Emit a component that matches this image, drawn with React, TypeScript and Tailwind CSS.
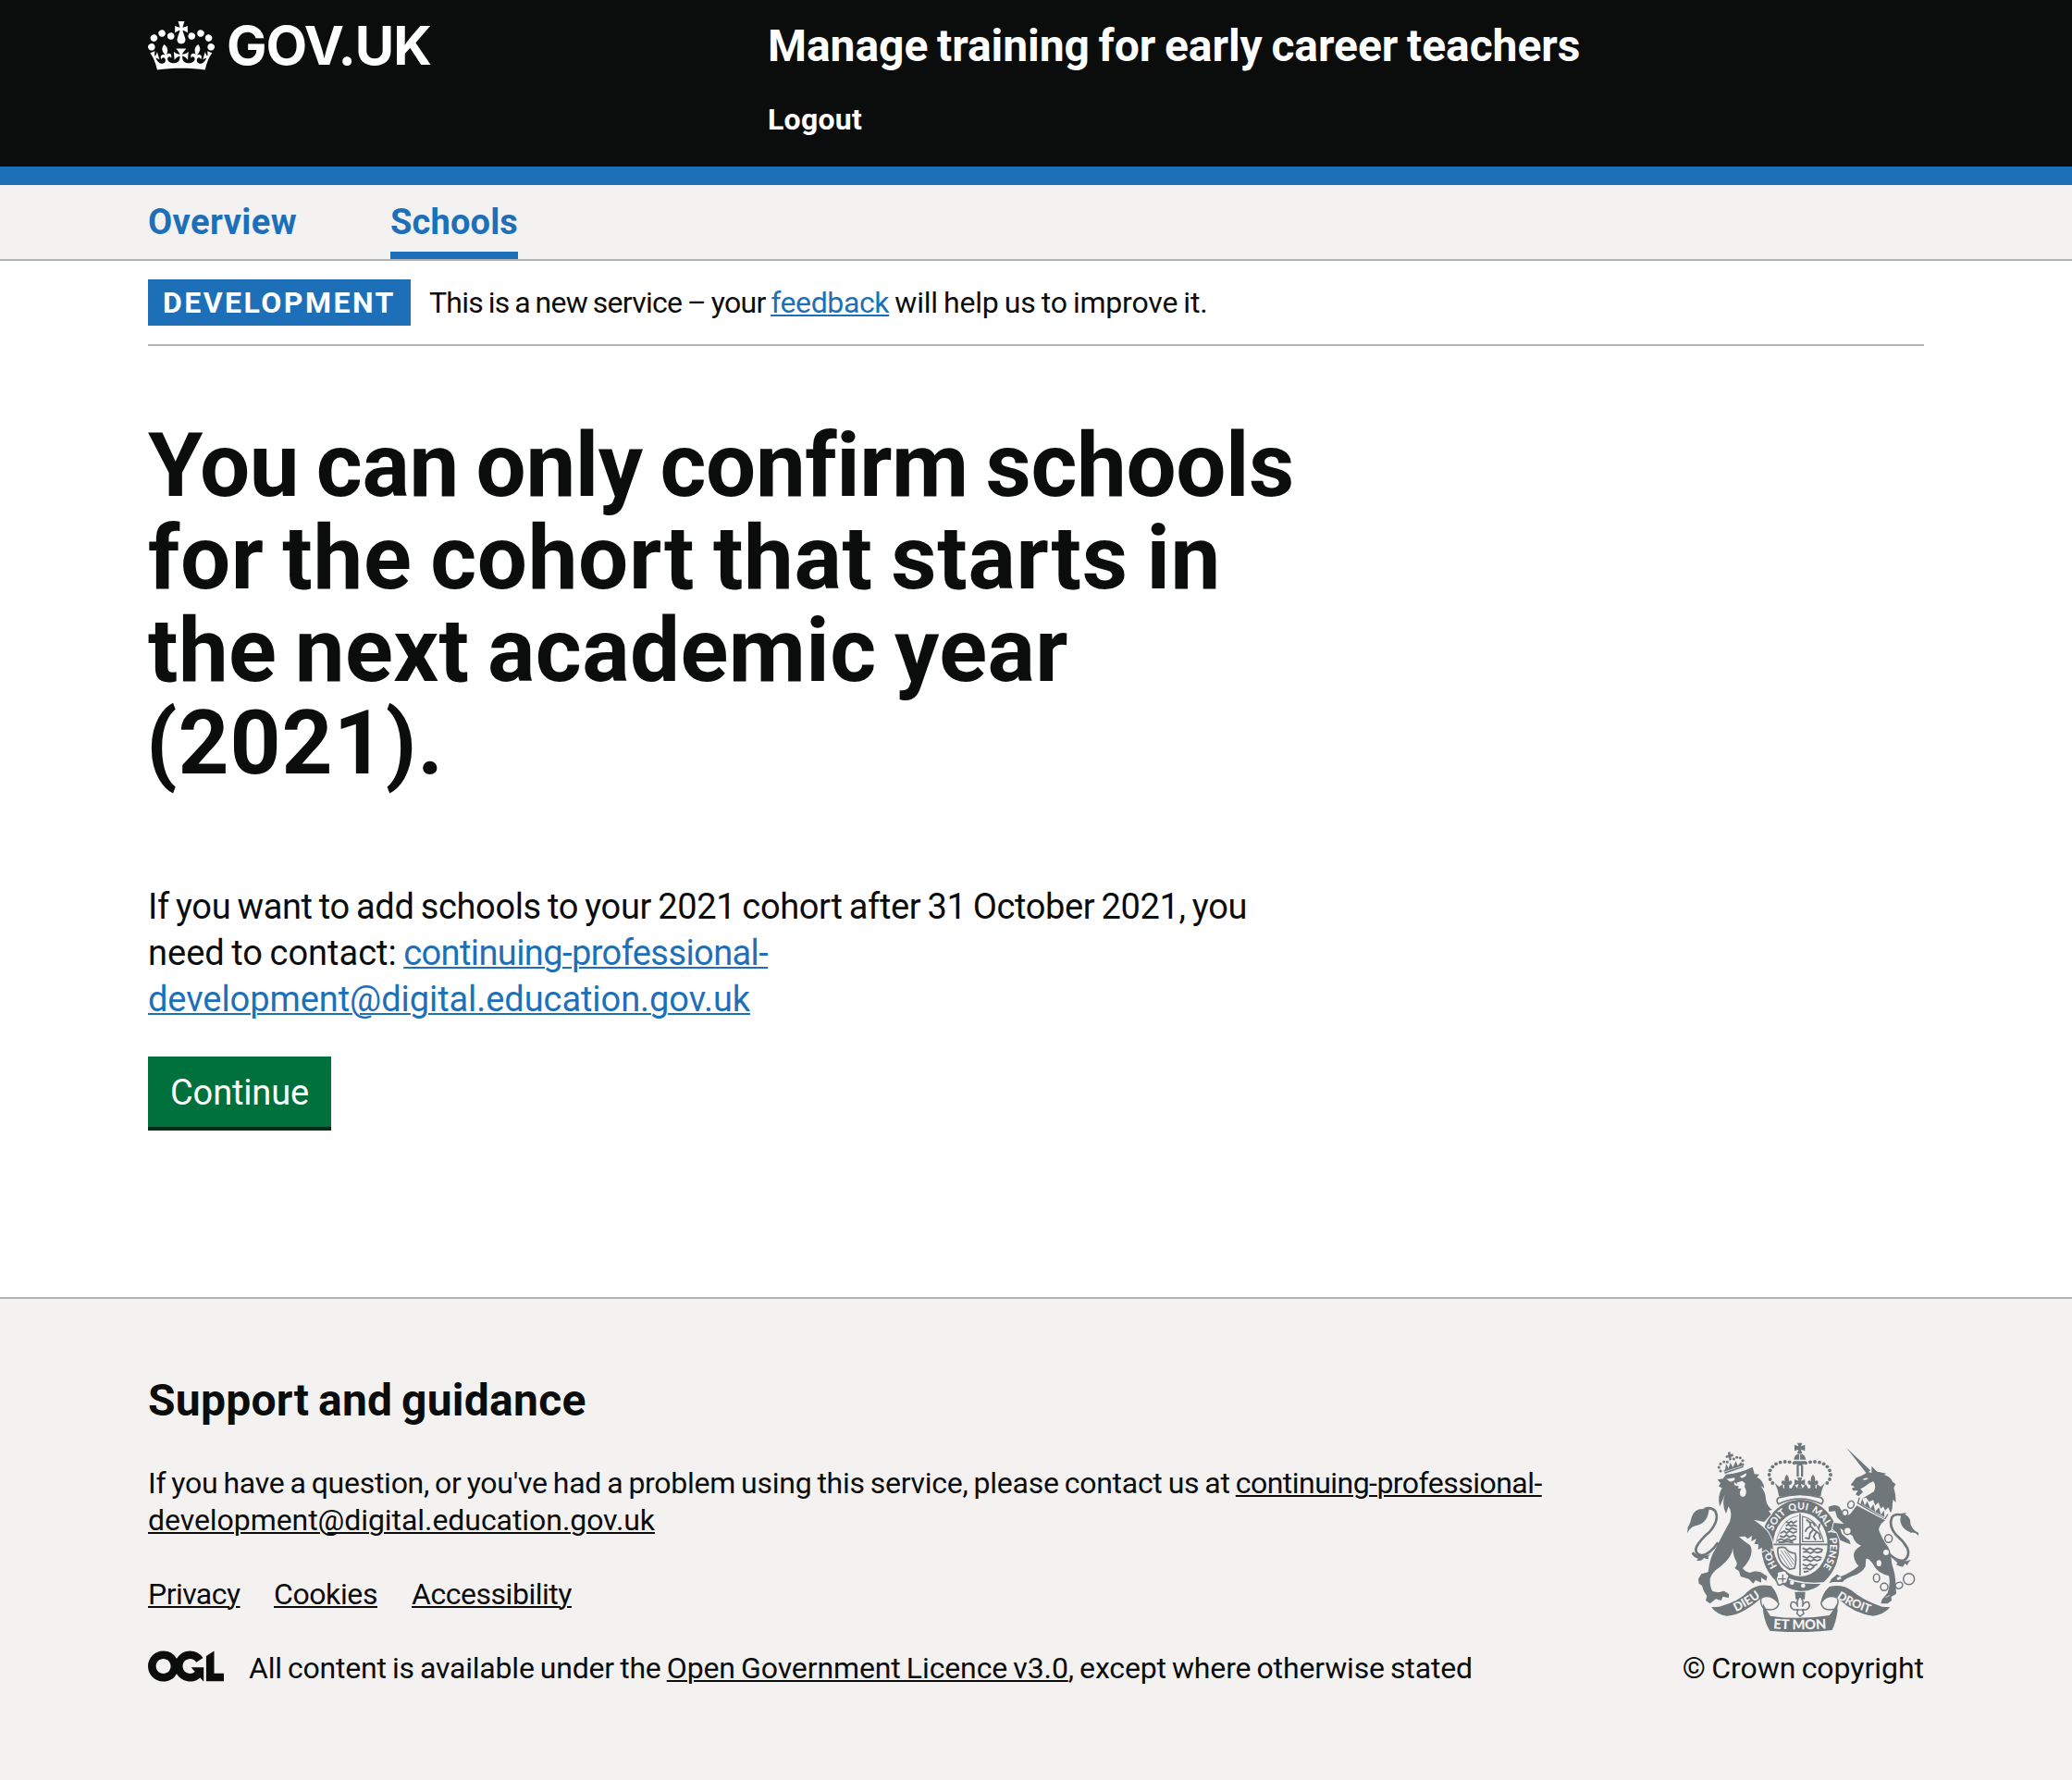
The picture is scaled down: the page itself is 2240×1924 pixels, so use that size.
import type { ReactNode } from "react";

const INK = "#6f777b";
const PAPER = "#f3f2f1";

function Crown() {
  return (
    <svg viewBox="0 0 132 97" className="h-[53px] w-[72px]" fill="currentColor" aria-hidden="true">
      <path
        fillRule="evenodd"
        d="M25 30.2c3.5 1.5 7.7-.2 9.1-3.7 1.5-3.6-.2-7.8-3.9-9.2-3.6-1.4-7.6.3-9.1 3.9-1.4 3.5.3 7.5 3.9 9zM9 39.5c3.6 1.5 7.8-.2 9.2-3.7 1.5-3.6-.2-7.8-3.9-9.1-3.6-1.5-7.6.2-9.1 3.8-1.4 3.5.3 7.5 3.8 9zM4.4 57.2c3.5 1.5 7.7-.2 9.1-3.8 1.5-3.6-.2-7.7-3.9-9.1-3.5-1.5-7.6.3-9.1 3.8-1.4 3.5.3 7.6 3.9 9.1zm38.3-21.4c3.5 1.5 7.7-.2 9.1-3.8 1.5-3.6-.2-7.7-3.9-9.1-3.6-1.5-7.6.3-9.1 3.8-1.3 3.6.4 7.7 3.9 9.1zm64.4-5.6c-3.6 1.5-7.8-.2-9.1-3.7-1.5-3.6.2-7.8 3.8-9.2 3.6-1.4 7.7.3 9.2 3.9 1.3 3.5-.4 7.5-3.9 9zm15.9 9.3c-3.6 1.5-7.7-.2-9.1-3.7-1.5-3.6.2-7.8 3.7-9.1 3.6-1.5 7.7.2 9.2 3.8 1.5 3.5-.3 7.5-3.8 9zm4.7 17.7c-3.6 1.5-7.8-.2-9.2-3.8-1.5-3.6.2-7.7 3.9-9.1 3.6-1.5 7.7.3 9.2 3.8 1.3 3.5-.4 7.6-3.9 9.1zM89.3 35.8c-3.6 1.5-7.8-.2-9.2-3.8-1.4-3.6.2-7.7 3.9-9.1 3.6-1.5 7.7.3 9.2 3.8 1.4 3.6-.3 7.7-3.9 9.1zM69.7 17.7l8.9 4.7V9.3l-8.9 2.8c-.2-.3-.5-.6-.9-.9L72.4 0H59.6l3.5 11.2c-.3.3-.6.5-.9.9l-8.8-2.8v13.1l8.8-4.7c.3.3.6.7.9.9l-5 15.4v.1c-.2.8-.4 1.6-.4 2.4 0 4.1 3.1 7.5 7 8.1h.2c.3 0 .7.1 1 .1.4 0 .7 0 1-.1h.2c4-.6 7.1-4.1 7.1-8.1 0-.8-.1-1.7-.4-2.4V34l-5.1-15.4c.4-.2.7-.6 1-.9zM66 92.8c16.9 0 32.8 1.1 47.1 3.2 4-16.9 8.9-26.7 14-33.5l-9.6-3.4c1 4.9 1.1 7.2 0 10.2-1.5-1.4-3-4.3-4.2-8.7L108.6 76c2.8-2 5-3.2 7.5-3.3-4.4 9.4-10 11.9-13.6 11.2-4.3-.8-6.3-4.6-5.6-7.9 1-4.7 5.7-5.9 8-.5 4.3-8.7-3-11.4-7.6-8.8 7.1-7.2 7.9-13.5 2.1-21.1-8 6.1-8.1 12.3-4.5 20.8-4.7-5.4-12.1-2.5-9.5 6.2 3.4-5.2 7.9-2 7.2 3.1-.6 4.3-6.4 7.8-13.5 7.2-10.3-.9-10.9-8-11.2-13.8 2.5-.5 7.1 1.8 11 7.3L80.2 60c-4.1 4.4-8 5.3-12.3 5.4 1.4-4.4 8-11.6 8-11.6H55.5s6.4 7.2 7.9 11.6c-4.2-.1-8-1-12.3-5.4l1.4 16.4c3.9-5.5 8.5-7.7 10.9-7.3-.3 5.8-.9 12.8-11.1 13.8-7.2.6-12.9-2.9-13.5-7.2-.7-5 3.8-8.3 7.1-3.1 2.7-8.7-4.6-11.6-9.4-6.2 3.7-8.5 3.6-14.7-4.6-20.8-5.8 7.6-5 13.9 2.2 21.1-4.7-2.6-11.9.1-7.7 8.8 2.3-5.5 7.1-4.2 8.1.5.7 3.3-1.3 7.1-5.7 7.9-3.5.7-9-1.8-13.5-11.2 2.5.1 4.7 1.3 7.5 3.3l-4.7-15.4c-1.2 4.4-2.7 7.2-4.3 8.7-1.1-3-.9-5.3 0-10.2l-9.5 3.4c5 6.9 9.9 16.7 14 33.5 14.8-2.1 30.8-3.2 47.7-3.2z"
      />
    </svg>
  );
}

function OglLogo() {
  return (
    <svg viewBox="0 0 483.2 195.7" className="mt-px h-[34px] w-[82px]" fill="currentColor" aria-hidden="true">
      <path d="M421.5 142.8V.1l-50.7 32.3v161.1h112.4v-50.7zm-122.3-9.6A47.12 47.12 0 0 1 221 97.8c0-26 21.1-47.1 47.1-47.1 16.7 0 31.4 8.7 39.7 21.8l42.7-27.2A97.63 97.63 0 0 0 268.1 0c-36.5 0-68.3 20.1-85.1 49.7A98 98 0 0 0 97.8 0C43.9 0 0 43.9 0 97.8s43.9 97.8 97.8 97.8c36.5 0 68.3-20.1 85.1-49.7a97.76 97.76 0 0 0 149.6 25.4l19.4 22.2h3v-87.8h-80l24.3 27.5zM97.8 145c-26 0-47.1-21.1-47.1-47.1s21.1-47.1 47.1-47.1 47.1 21.1 47.1 47.1S123.8 145 97.8 145" />
    </svg>
  );
}

function Lion() {
  const pearls = [[120, 90], [115, 78], [120, 67], [131, 60], [142, 61], [163, 51], [173, 46], [184, 47], [192, 56], [192, 69]];
  return (
    <g transform="translate(60 60)">
      <path
        stroke={PAPER}
        strokeWidth="6"
        paintOrder="stroke"
        d="M110 118L128 115L138 101Q185 97 224 77L230 100L246 101L238 110Q258 118 262 146L250 138Q266 158 267 180Q270 205 288 216L276 219L284 230L262 255L228 248Q262 272 275 290Q292 318 290 345L284 340L282 357L268 345L254 352L255 338L242 345L243 328L230 326L236 310L220 318L222 300L208 310L200 302L180 303Q196 318 215 330Q224 340 219 362Q212 385 192 405Q197 415 215 420L232 415L250 418L272 432L268 446L252 436L252 452L234 444L226 455L212 440L185 432L180 415L166 405Q176 395 172 385Q160 365 160 340Q158 370 120 400Q90 420 86 440Q85 465 94 480L112 484L132 479L148 490L146 502L128 497L122 510L105 505L86 520L72 510L76 495L66 480L60 462L50 455L48 440L58 424L80 418Q85 370 105 340Q130 290 150 255Q160 225 146 205L138 228Q122 195 135 165L118 205Q108 175 125 145L114 140L120 130Z"
      />
      <path
        d="M139 116L165 112L167 118Q160 126 150 124ZM183 108L204 97L203 105Q195 114 187 112ZM164 126L176 134L172 128L190 122L200 130L198 142Q208 158 200 170Q190 178 184 168Q180 158 188 148L176 146L180 140L165 136Z"
        fill={PAPER}
      />
      <path d="M130 88L194 67L194 78L134 99ZM135 86L138 66L146 82L152 62L160 78L170 58L176 73L187 60L190 72Z" />
      <path d="M132 93L194 73" stroke={PAPER} strokeWidth="2" />
      <path d="M144 30l8-3 0 9 8-2 2 8-8 2 2 10-7 2-2-10-9 2-2-7 9-3z" />
      {pearls.map(([x, y]) => (
        <circle key={`${x}-${y}`} cx={x} cy={y} r="4.5" />
      ))}
      <path d="M112 322Q85 362 58 364Q34 358 42 336Q55 312 84 288Q118 248 103 220Q90 205 68 213" fill="none" stroke={INK} strokeWidth="8" />
      <path d="M82 220Q76 262 38 268Q22 272 12 292L14 272Q22 262 26 240Q36 212 62 213L84 208ZM32 352Q48 372 88 360Q76 368 82 376Q70 374 66 372Q60 384 42 380L48 374Q34 372 26 358Z" />
    </g>
  );
}

function Unicorn() {
  return (
    <g transform="translate(510 60)">
      <path d="M78 14L156 88L144 98Z" />
      <path d="M92 135L110 112Q132 105 148 93L160 96L160 74L178 92L208 98L200 102Q222 108 228 125L238 133L232 145Q240 170 238 192L230 182L228 196Q228 216 222 226L214 208L204 218L198 205L190 212L182 192L172 202L165 184L152 190L142 176L128 180Q150 168 168 156Q176 138 166 124Q150 128 136 142L124 148L132 158L118 172L108 166L116 154L100 154L96 146L106 142Z" />
      <path d="M130 118q10-8 20-4q-8 8-20 4z" fill={PAPER} />
      <path d="M121 176L115 194L203 246L213 230" fill="none" stroke={INK} strokeWidth="4" />
      <path d="M124 196L130 180L138 202L146 188L156 212L166 198L172 222L184 208L190 232L200 218L202 240Z" />
      <path
        stroke={PAPER}
        strokeWidth="6"
        paintOrder="stroke"
        d="M112 202L204 250Q185 264 183 280Q190 300 205 325Q222 345 222 365Q225 395 234 420L237 440L240 488L224 498L225 510L212 520L190 520L194 506L212 485Q222 455 216 430Q180 422 165 392Q150 372 142 375L140 400Q128 422 100 430Q76 438 66 450L34 450L22 454L30 440L48 425L60 432Q92 420 118 398Q105 385 102 365Q102 345 126 332Q106 325 98 300L58 276L64 294L80 308L88 314L92 328L76 322L58 314L48 290L33 278L38 258L70 262L48 240L42 220L22 222L20 206Q44 196 56 207L68 228Q82 238 92 228Z"
      />
      <path d="M48 437l10-4 3 6-11 4zM205 500l14-6" fill={PAPER} stroke={PAPER} strokeWidth="2" />
      <g fill={PAPER}>
        <ellipse cx="74" cy="226" rx="9" ry="10" stroke={INK} strokeWidth="4" />
        <circle cx="207" cy="354" r="9" />
        <ellipse cx="184" cy="389" rx="8" ry="10" />
      </g>
      <g fill={PAPER} stroke={INK} strokeWidth="4.5">
        <ellipse cx="93" cy="199" rx="10" ry="12" transform="rotate(20 93 199)" />
        <ellipse cx="82" cy="284" rx="12" ry="12" />
        <ellipse cx="215" cy="309" rx="12" ry="13" />
        <ellipse cx="176" cy="437" rx="10" ry="13" />
        <circle cx="201" cy="466" r="12" />
        <ellipse cx="249" cy="461" rx="12" ry="10" transform="rotate(-25 249 461)" />
        <circle cx="281" cy="440" r="18" />
      </g>
      <path d="M218 360Q245 385 266 380Q286 365 276 340Q262 316 240 298Q214 268 226 240Q236 226 262 234" fill="none" stroke={INK} strokeWidth="8" />
      <path d="M250 229L274 225L268 230Q288 240 286 262Q294 284 312 290L312 300Q302 288 288 290Q262 280 256 262Q250 246 256 236ZM226 372Q250 390 288 378Q280 384 276 396L268 390L262 400Q254 402 240 394L244 388Z" />
    </g>
  );
}

function RoyalCrown() {
  const pearls = [[119, 79], [104, 76], [89, 75], [74, 77], [60, 82], [49, 91], [41, 103], [38, 117], [41, 132], [49, 144]];
  const cross = "M-8 -17h16l-4 11 13-5v20l-13-5 4 13h-16l4-13-13 5v-20l13 5z";
  return (
    <g>
      <path d={cross} transform="translate(137 31)" />
      <path d="M118 68Q120 50 137 49Q154 50 157 68ZM118 73H157Q150 88 137 88Q124 88 118 73Z" />
      <path d="M137 50v18" stroke={PAPER} strokeWidth="3" />
      <path d="M127 87h7v36h-7zM141 87h7v36h-7z" />
      {pearls.map(([x, y]) => (
        <g key={`${x}-${y}`}>
          <circle cx={x} cy={y} r="5.8" />
          <circle cx={275 - x} cy={y} r="5.8" />
        </g>
      ))}
      <path d={cross} transform="translate(137 143)" />
      {[95, 180].map((x) => (
        <path
          key={x}
          transform={`translate(${x} 140)`}
          d="M0 -24Q10 -12 6 0Q12 -8 17 0Q18 8 8 10L8 22H-8L-8 10Q-18 8 -17 0Q-12 -8 -6 0Q-10 -12 0 -24Z"
        />
      ))}
      <path d="M56 144L70 156L82 148L84 162L95 158L110 162L118 148L128 160H147L157 148L165 162L180 158L191 162L193 148L205 156L219 144Q208 162 205 188Q137 172 70 188Q66 162 56 144Z" />
      <path d="M68 212Q58 200 68 192Q137 170 207 192Q218 200 208 212Q137 178 68 212Z" fill={PAPER} stroke={INK} strokeWidth="5" />
    </g>
  );
}

function Garter() {
  const words = [
    { word: "HO", at: 114 },
    { word: "SOIT", at: 244 },
    { word: "QUI", at: 322 },
    { word: "MAL", at: 399 },
    { word: "Y", at: 452 },
    { word: "PENSE", at: 521 },
  ];
  return (
    <g>
      <ellipse cx="139" cy="346" rx="127" ry="148" />
      <ellipse cx="139" cy="343" rx="88" ry="104" fill={PAPER} />
      <path id="garter-line" d="M139 456A96 113 0 0 1 139 230A96 113 0 0 1 139 456" fill="none" />
      {words.map(({ word, at }) => (
        <text key={word} fill={PAPER} fontSize="32" fontWeight="900" textAnchor="middle" className="font-[Lato]">
          <textPath href="#garter-line" startOffset={at}>
            {word}
          </textPath>
        </text>
      ))}
      <g fill="none" stroke={INK} strokeWidth="5">
        <path d="M138 242V444M50 343H229" />
        <path d="M146 252Q196 262 214 334H146Z" strokeWidth="3.5" />
        <path d="M60 340Q74 262 132 250" strokeWidth="2" />
        <path d="M66 355Q62 400 104 424L120 420Q128 390 122 372Q100 370 90 354Q78 350 66 355Z" />
        <path d="M76 362L112 416M86 362L117 408M96 368L120 398M72 374L104 420" strokeWidth="2.5" />
      </g>
      <g fill="none" stroke={INK} strokeWidth="5.5" strokeLinecap="round" strokeLinejoin="round">
        <path d="M94 270l8 4 8-6 6 6 10-6M94 282l6-4 8 6 8-4 10 4M92 292l10 4 10-6 14 5" />
        <path d="M76 306l10-6 8 6 10-6 12 6 10-4M74 316l12 4 8-8 10 8 12-6 8 4" />
        <path d="M66 330l10-5 10 6 12-6 12 6 14-6M70 336l14 0 10-3 20 4" />
        <path d="M148 356l12 5 10-6 12 6 12-5 16 4M150 368l10-2 12 6 10-6 12 4 14-4" />
        <path d="M148 382l12 5 10-6 12 6 12-5 12 4M150 394l10-2 12 6 10-6 12 4 10-4" />
        <path d="M148 408l12 5 10-6 12 6 10-5M150 422l10-2 10 5 12-8M152 432l12-2" />
        <path d="M160 264l10 8 2 12 14 14 14 10 4 16M172 284l-12 8-4 8M180 296l-10 12-2 16M190 304l-8 14 6 10M170 272l10 0 6 10M156 322l10 2M198 292l4-14" />
      </g>
      <path d="M72 440Q120 474 212 468Q180 500 136 496Q92 492 60 456Z" stroke={PAPER} strokeWidth="4" />
      <circle cx="112" cy="467" r="7" fill={PAPER} />
      <circle cx="148" cy="477" r="7" fill={PAPER} />
      <path d="M64 444Q60 430 76 430Q92 424 96 438Q108 444 98 456Q98 472 82 470Q66 482 64 466Q56 456 64 444Z" fill={PAPER} stroke={INK} strokeWidth="5" />
      <path d="M66 455h26M82 440v26" stroke={INK} strokeWidth="4" />
    </g>
  );
}

function Scrolls() {
  return (
    <g>
      <path d="M150 592L176 590Q240 574 272 538Q302 513 345 523Q366 548 370 580Q350 555 325 556Q314 558 306 568Q244 620 200 620Q172 618 150 592Z" />
      <path d="M730 592L704 590Q644 571 606 538Q574 515 533 525Q510 546 505 578Q522 556 545 556Q558 558 566 568Q616 614 675 620Q706 618 730 592Z" />
      <g fill={PAPER} stroke={INK} strokeWidth="4.5">
        <path d="M312 562Q306 580 322 598L340 600Q364 600 369 580Q350 552 324 557Z" />
        <path d="M559 562Q566 580 552 598L534 600Q510 600 506 578Q522 552 546 557Z" />
      </g>
      <path d="M318 580Q334 610 342 620Q437 634 533 618Q542 608 558 580L560 604Q554 642 542 666Q437 678 340 668Q324 644 318 604Z" />
      <path id="scroll-left" d="M212 614Q268 592 326 546" fill="none" />
      <path id="scroll-mid" d="M340 660Q437 668 535 660" fill="none" />
      <path id="scroll-right" d="M545 554Q600 594 682 616" fill="none" />
      <g fill={PAPER} fontWeight="900" textAnchor="middle" className="font-[Lato]">
        <text fontSize="39">
          <textPath href="#scroll-left" startOffset="50%">DIEU</textPath>
        </text>
        <text fontSize="44">
          <textPath href="#scroll-mid" startOffset="50%">ET MON</textPath>
        </text>
        <text fontSize="38">
          <textPath href="#scroll-right" startOffset="48%">DROIT</textPath>
        </text>
      </g>
      <path d="M421 542H455L453 566H424Z" />
      <path
        d="M438 556Q452 572 445 590Q452 570 466 576Q474 592 458 600L446 600L450 612L438 622L428 612L431 600L418 600Q402 592 410 576Q424 570 431 590Q424 572 438 556Z"
        fill={PAPER}
        stroke={INK}
        strokeWidth="4.5"
      />
      <path d="M424 600H452" stroke={INK} strokeWidth="4" />
    </g>
  );
}

function RoyalArms() {
  return (
    <svg viewBox="72 57 750 615" className="mr-1.5 h-[205px] w-[250px] [word-spacing:0]" fill={INK} aria-hidden="true">
      <g transform="translate(300 45)">
        <Garter />
        <RoyalCrown />
      </g>
      <Lion />
      <Unicorn />
      <Scrolls />
    </svg>
  );
}

function Link({ children, className = "" }: { children: ReactNode; className?: string }) {
  return (
    <a href="#" className={`underline decoration-2 underline-offset-[2px] ${className}`}>
      {children}
    </a>
  );
}

export default function App() {
  return (
    <div className="min-h-[1924px] bg-white font-[Roboto,sans-serif] text-[32px] leading-[40px] whitespace-nowrap text-[#0b0c0c] [word-spacing:-0.05em]">
      <header className="h-[200px] border-b-[20px] border-[#1d70b8] bg-[#0b0c0c] px-40 font-bold text-white">
        <div className="flex">
          <a href="#" className="flex w-[670px] pt-[23px]">
            <Crown />
            <span className="ml-[13px] font-[Inter] text-[58px] leading-[53px] tracking-[-0.018em]">GOV.UK</span>
          </a>
          <div className="pt-5">
            <p className="text-[48px] leading-[60px] tracking-[-0.0013em] [word-spacing:-0.045em]">
              Manage training for early career teachers
            </p>
            <p className="mt-[29px] tracking-[0.008em]">Logout</p>
          </div>
        </div>
      </header>

      <nav className="flex h-[82px] gap-[101px] border-b-2 border-[#b1b4b6] bg-[#f3f2f1] px-40 text-[38px] leading-[50px] font-bold text-[#1d70b8]">
        <a href="#" className="w-[161px] pt-[15px] tracking-[0.011em]">Overview</a>
        <a href="#" className="w-[138px] border-b-8 pt-[15px] tracking-[0.004em]">Schools</a>
      </nav>

      <main className="px-40">
        <div className="flex h-[92px] items-start border-b-2 border-[#b1b4b6] pt-5 leading-[50px]">
          <strong className="mr-5 w-[284px] bg-[#1d70b8] pl-4 tracking-[0.077em] text-white">DEVELOPMENT</strong>
          <p className="tracking-[-0.006em]">
            <span className="tracking-[-0.0225em]">This is a new service – your </span>
            <Link className="tracking-[-0.012em] text-[#1d70b8]">feedback</Link> will help us to improve it.
          </p>
        </div>

        <h1 className="mt-[79px] text-[96px] leading-[100px] font-bold [word-spacing:-0.05em]">
          <span className="block tracking-[-0.004em]">You can only confirm schools</span>
          <span className="block tracking-[0.0068em]">for the cohort that starts in</span>
          <span className="block tracking-[0.0044em]">the next academic year</span>
          <span className="-ml-[2px] block tracking-[0.01em]">(2021).</span>
        </h1>

        <p className="mt-[102px] text-[38px] leading-[50px] [word-spacing:-0.05em]">
          <span className="block tracking-[-0.0093em]">
            If you want to add schools to your 2021 cohort after 31 October 2021, you
          </span>
          <span className="block">
            <span>need to contact: </span>
            <Link className="tracking-[-0.0156em] text-[#1d70b8]">continuing-professional-</Link>
          </span>
          <Link className="tracking-[-0.0017em] text-[#1d70b8]">development@digital.education.gov.uk</Link>
        </p>

        <button className="mt-[37px] mb-[180px] block h-20 w-[198px] border-b-4 border-[#002d18] bg-[#00703c] pt-0.5 text-[38px] leading-[74px] tracking-[-0.004em] text-white">
          Continue
        </button>
      </main>

      <footer className="h-[522px] border-t-2 border-[#b1b4b6] bg-[#f3f2f1] px-40 pt-20">
        <h2 className="text-[48px] leading-[60px] font-bold tracking-[0.005em] [word-spacing:-0.05em]">Support and guidance</h2>
        <div className="flex items-end justify-between">
          <div className="pt-[39px]">
            <p>
              <span className="tracking-[-0.0084em]">
                If you have a question, or you've had a problem using this service, please contact us at{" "}
              </span>
              <Link className="tracking-[-0.0166em]">continuing-professional-</Link>
              <br />
              <Link className="tracking-[-0.0019em]">development@digital.education.gov.uk</Link>
            </p>
            <div className="mt-10 flex">
              <Link className="mr-[37px] w-[99px] tracking-[-0.0173em]">Privacy</Link>
              <Link className="mr-[37px] w-[112px] tracking-[-0.0126em]">Cookies</Link>
              <Link className="tracking-[-0.0146em]">Accessibility</Link>
            </div>
            <div className="mt-10 flex">
              <OglLogo />
              <p className="ml-[27px] tracking-[-0.005em]">
                <span className="tracking-[-0.0063em]">All content is available under the </span>
                <Link className="tracking-[-0.0038em]">Open Government Licence v3.0</Link>, except where otherwise stated
              </p>
            </div>
          </div>
          <div className="flex flex-col items-end">
            <RoyalArms />
            <p className="mt-[19px] tracking-[-0.001em]">© Crown copyright</p>
          </div>
        </div>
      </footer>
    </div>
  );
}
